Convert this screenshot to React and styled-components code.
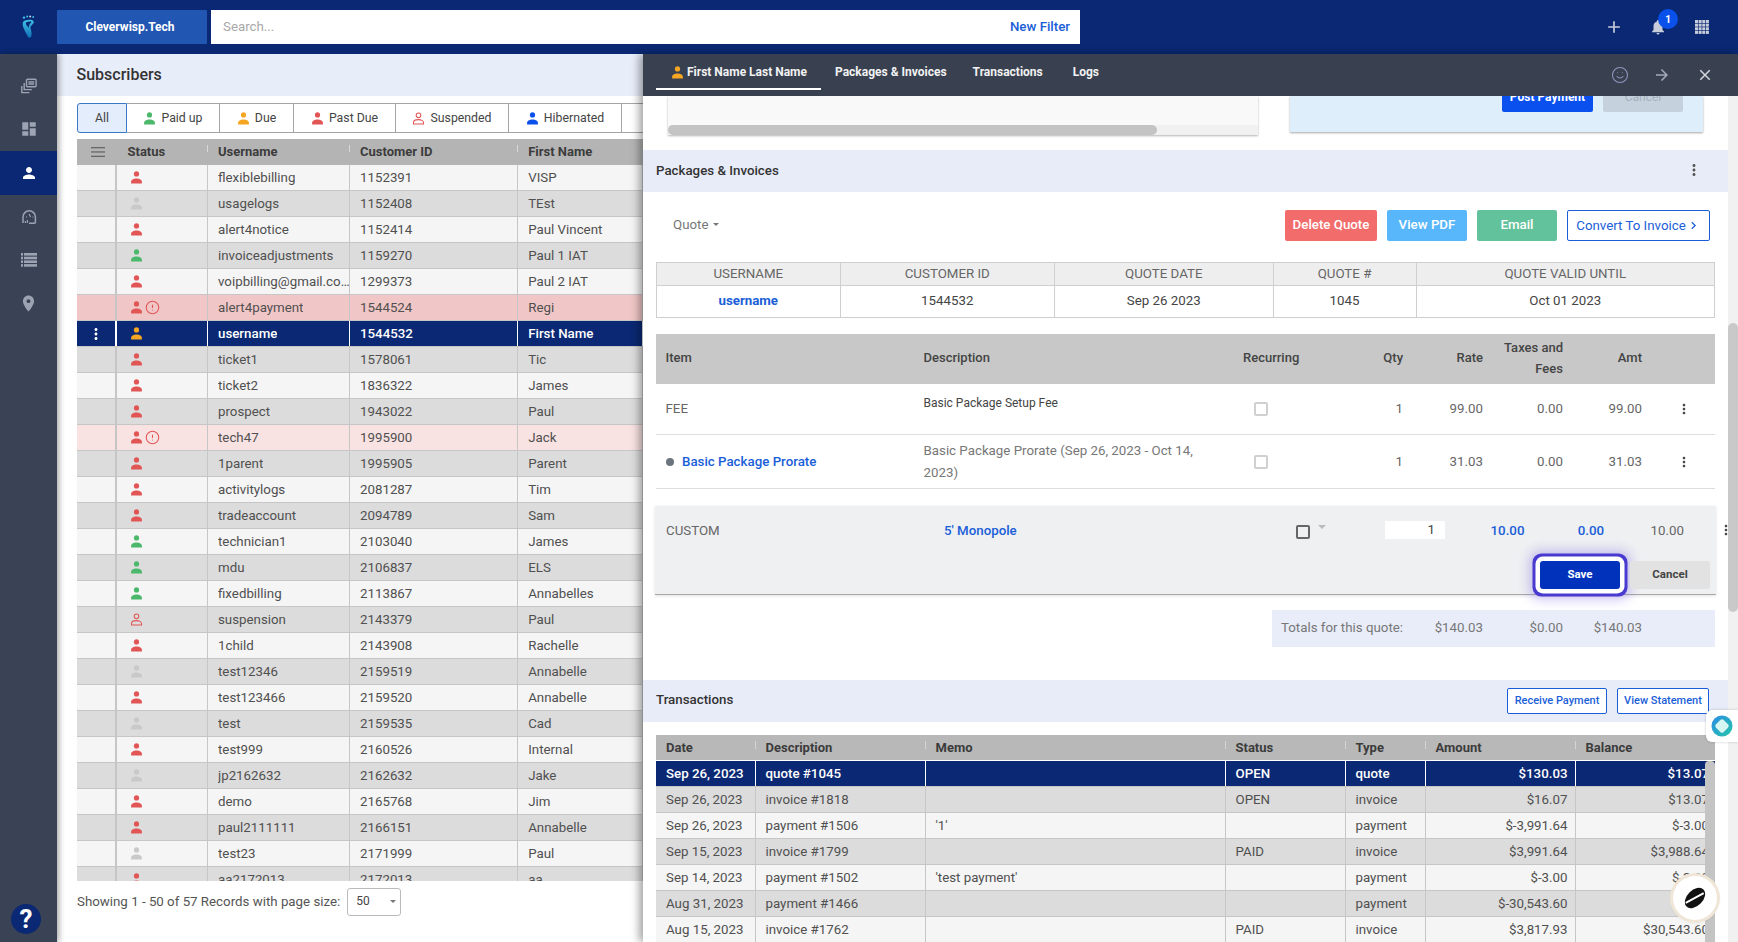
import React from "react";
import styled, { createGlobalStyle } from "styled-components";
import { MdDashboard, MdPerson, MdPlace, MdMoreVert, MdClose, MdArrowForward, MdAdd, MdNotifications, MdChevronRight } from "react-icons/md";
import { Smile, CircleAlert } from "lucide-react";

const Global = createGlobalStyle`
  html, body { margin: 0; padding: 0; height: 100%; overflow: hidden; background: #fff; }
  body { font-family: Roboto, "Liberation Sans", sans-serif; font-size: 13.3px; color: #444; }
  * { box-sizing: border-box; }
`;

const Page = styled.div`height: 942px; width: 1738px; display: flex; flex-direction: column; overflow: hidden;`;
const TopBar = styled.header`height: 54px; flex: none; background: #0a2873; display: flex; align-items: center;`;
const LogoCell = styled.div`width: 57px; display: flex; justify-content: center;`;
const Brand = styled.div`width: 150px; height: 34px; background: #2156b2; color: #fff; font-weight: 700; font-size: 12px; display: flex; align-items: center; justify-content: center; border-radius: 1px; padding: 0 4px 1px 0;`;
const SearchBox = styled.div`width: 869px; height: 34px; margin-left: 4px; background: #fff; display: flex; align-items: center; padding: 0 10px 2px 12px;`;
const SearchInput = styled.input`flex: 1; border: 0; outline: 0; font: 13.3px Roboto, sans-serif; padding: 0; &::placeholder { color: #a8a8a8; opacity: 1; }`;
const NewFilter = styled.span`color: #1a5ed8; font-weight: 500; font-size: 13.3px;`;
const TopIcons = styled.div`margin-left: auto; display: flex; align-items: center; gap: 0; padding-right: 14px; color: #c8cddb;`;
const TopIconCell = styled.div`width: 44px; display: flex; justify-content: center; position: relative;`;
const Badge = styled.span`position: absolute; top: -9px; left: 22px; width: 20px; height: 20px; border-radius: 50%; background: #0a50ea; color: #fff; font-size: 10px; font-weight: 700; display: flex; align-items: center; justify-content: center;`;

const Body = styled.div`flex: 1; min-height: 0; display: flex;`;
const Sidebar = styled.nav`width: 57px; flex: none; background: #3a4255; display: flex; flex-direction: column; padding-top: 10px; padding-bottom: 8px; box-shadow: 2px 0 6px rgba(0,0,0,.35); z-index: 2;`;
const SideItem = styled.div`height: 43.6px; display: flex; align-items: center; justify-content: center; background: ${p => p.$active ? "#0a2873" : "transparent"}; color: ${p => p.$active ? "#fff" : "#9ca3b2"};`;
const Help = styled.div`margin: auto 0 0 11px; width: 30px; height: 30px; border-radius: 50%; background: #0a2873; color: #fff; font-size: 26px; font-weight: 700; display: flex; align-items: center; justify-content: center;`;

const List = styled.section`width: 586px; flex: none; display: flex; flex-direction: column; overflow: hidden; background: #fff;`;
const ListTitle = styled.div`height: 42px; flex: none; background: #e8edfa; display: flex; align-items: center; padding: 0 0 2px 19.5px; font-size: 16px; font-weight: 500; color: #333;`;
const Tabs = styled.div`display: flex; flex: none; margin: 7px 0 6px 20px; height: 30px;`;
const Tab = styled.div`flex: none; width: ${p => p.$w}px; display: flex; align-items: center; justify-content: center; gap: 5px; font-size: 12.3px; color: #444; border: 1px solid #a5a5a5; border-left-width: 0; ${p => p.$active && "background: #e3edfb; border: 1px solid #3a78c8; border-radius: 3px 0 0 3px;"}`;
const GridHead = styled.div`margin-left: 20px; height: 26px; flex: none; display: grid; grid-template-columns: 40px 90.5px 142px 168.2px 1fr; background: #b4b4b4; font-weight: 700; font-size: 13px; color: #3c3c3c; padding-bottom: 1px;`;
const HeadCell = styled.div`display: flex; align-items: center; padding-left: ${p => p.$pl ?? 10.5}px; position: relative; ${p => p.$mark && `&::after { content: ""; position: absolute; right: 0; top: 6px; height: 7px; width: 1px; background: #d8d8d8; }`}`;
const Rows = styled.div`margin-left: 20px; flex: none; height: 716px; overflow: hidden;`;
const rowBg = { light: "#f5f5f5", dark: "#dcdcdc", pink: "#f0c6c6", lpink: "#f8e2e2", sel: "#0a2873" };
const Row = styled.div`height: 26px; display: grid; grid-template-columns: 40px 90.5px 142px 168.2px 1fr; background: ${p => rowBg[p.$bg]}; color: ${p => p.$bg === "sel" ? "#fff" : "#505050"}; font-weight: ${p => p.$bg === "sel" ? 500 : 400}; border-bottom: 1px solid #c6c6c6;`;
const Cell = styled.div`display: flex; align-items: center; padding-left: ${p => p.$pl ?? 10.5}px; border-right: 1px solid ${p => p.$sel ? "#fff" : "#c6c6c6"}; overflow: hidden; white-space: nowrap; gap: 2px; min-width: 0;`;
const Ellip = styled.span`overflow: hidden; text-overflow: ellipsis; margin-right: -2px;`;
const MenuCell = styled.div`display: flex; align-items: center; justify-content: center; color: #fff; border-right: 2px solid ${p => p.$sel ? "#fff" : "#c6c6c6"};`;
const Foot = styled.div`display: flex; align-items: center; gap: 7px; margin: 7px 0 0 20px; color: #555;`;
const FootText = styled.span`margin-bottom: 2px; white-space: nowrap;`;
const PageSize = styled.div`width: 54px; height: 28px; border: 1px solid #bbb; border-radius: 3px; display: flex; align-items: center; justify-content: space-between; padding: 0 4px 2px 8px; color: #444; font-size: 12px;`;
const Caret = styled.span`width: 0; height: 0; border-left: ${p => p.$s ?? 3}px solid transparent; border-right: ${p => p.$s ?? 3}px solid transparent; border-top: ${p => p.$s ?? 3}px solid ${p => p.$c ?? "#777"}; display: inline-block;`;

const Panel = styled.section`width: 1095px; flex: none; display: flex; flex-direction: column; background: #fff; box-shadow: -4px 0 8px rgba(0,0,0,.35); z-index: 3;`;
const PanelHead = styled.div`height: 42px; flex: none; background: #394150; display: flex; align-items: flex-start; padding-left: 13px; color: #fff;`;
const PanelTab = styled.div`display: flex; align-items: center; gap: 3px; font-size: 12px; font-weight: 700; height: 36px; padding-top: 2px; margin-right: ${p => p.$mr}px; padding-left: ${p => p.$pl ?? 0}px; padding-right: ${p => p.$pr ?? 0}px; border-bottom: 2px solid ${p => p.$on ? "#fff" : "transparent"}; color: #f2f2f2;`;
const PanelActions = styled.div`margin-left: auto; height: 42px; display: flex; align-items: center; color: #a3a9b8; padding-right: 12px;`;
const PanelAction = styled.div`width: 42.5px; display: flex; justify-content: center;`;
const ScrollWrap = styled.div`flex: 1; min-height: 0; display: flex;`;
const Content = styled.div`width: 1085px; flex: none; overflow: hidden; background: #fff;`;
const Track = styled.div`width: 10px; flex: none; background: #f1f1f1;`;
const Thumb = styled.div`margin-top: 227px; height: 289px; background: #c9c9c9; border-radius: 5px;`;

const CardsRow = styled.div`height: 54px; display: flex; gap: 32px; padding-left: 25px;`;
const GreyCard = styled.div`width: 590px; height: 39px; background: #f9f9f9; box-shadow: 0 1px 2px rgba(0,0,0,.3); display: flex; align-items: flex-end;`;
const HScrollTrack = styled.div`width: 100%; height: 10px; background: #f1f1f1;`;
const HScrollThumb = styled.div`width: 489px; height: 10px; border-radius: 5px; background: #c4c4c4;`;
const BlueCard = styled.div`width: 413px; height: 36px; background: #dfeefb; box-shadow: 0 1px 2px rgba(0,0,0,.35); display: flex; align-items: flex-end; justify-content: flex-end; gap: 10px; padding: 0 20px 20px 0; overflow: hidden;`;
const PostBtn = styled.div`flex: none; width: ${p => p.$w}px; height: 28px; border-radius: 2px; display: flex; align-items: center; justify-content: center; padding-bottom: 2px; font-size: 12px; font-weight: ${p => p.$muted ? 400 : 700}; background: ${p => p.$muted ? "#c5d2de" : "#0a50ef"}; color: ${p => p.$muted ? "#a5b0bb" : "#fff"};`;

const SectionBar = styled.div`height: 42px; background: #e8ecf9; display: flex; align-items: center; padding: 0 19px 0 13px; font-size: 13.3px; font-weight: 500; color: #333;`;
const BarTitle = styled.span`margin-bottom: ${p => p.$mb}px;`;
const BarEnd = styled.div`margin-left: auto; display: flex; gap: 10px; align-items: center; color: #555;`;
const BarKebab = styled.div`margin: 0 6px 2px 0; display: flex;`;
const QuoteRow = styled.div`height: 70px; display: flex; padding: 18px 18px 0 30px; gap: 10px;`;
const QuoteSelect = styled.div`display: flex; align-items: center; gap: 5px; height: 29px; color: #777; margin-right: auto;`;
const ActBtn = styled.div`flex: none; width: ${p => p.$w}px; height: 31px; border-radius: 2px; background: ${p => p.$bg}; color: #fff; font-size: 13.3px; font-weight: 500; display: flex; align-items: center; justify-content: center; padding-bottom: 2px;`;
const OutlineBtn = styled.div`flex: none; width: ${p => p.$w}px; height: ${p => p.$h}px; background: #fff; border: 1px solid #1a5ed8; border-radius: 2px; color: #1a5ed8; font-size: ${p => p.$fs}px; font-weight: ${p => p.$fw ?? 400}; display: flex; align-items: center; justify-content: center; padding-bottom: 1px;`;

const InfoTable = styled.div`margin: 0 13px; border: 1px solid #cfcfcf; display: grid; grid-template-columns: 183.5px 214.5px 218.5px 143px 1fr; text-align: center;`;
const InfoHead = styled.div`height: 23px; line-height: 22px; background: #eee; color: #666; border-bottom: 1px solid #cfcfcf; border-right: ${p => p.$last ? 0 : 1}px solid #cfcfcf;`;
const InfoCell = styled.div`height: 31px; line-height: 30px; color: ${p => p.$link ? "#1a5ed8" : "#444"}; font-weight: ${p => p.$link ? 700 : 400}; border-right: ${p => p.$last ? 0 : 1}px solid #cfcfcf;`;

const itemCols = "258.5px 328.5px 100px 60px 80px 80px 79px 1fr";
const ItemHead = styled.div`margin: 16px 13px 0; height: 50px; background: #c8c8c8; display: grid; grid-template-columns: ${itemCols}; align-items: center; font-weight: 500; font-size: 13px; color: #444; line-height: 21px; padding-bottom: 3px;`;
const ItemRow = styled.div`margin: 0 13px; height: ${p => p.$h}px; padding-bottom: ${p => p.$pb ?? 0}px; display: grid; grid-template-columns: ${itemCols}; align-items: center; border-bottom: 1px solid #ddd; color: #666;`;
const ColItem = styled.div`padding-left: ${p => p.$pl ?? 9.5}px; display: flex; align-items: center; gap: 8.5px;`;
const Bullet = styled.span`width: 8px; height: 8px; border-radius: 50%; background: #6c757d;`;
const BlueLink = styled.span`color: #1a5ed8; font-weight: 500;`;
const ColDesc = styled.div`padding: 0 30px 0 9px; line-height: 22px; color: #777;`;
const ColDescHead = styled.div`padding-left: 9px; color: #444;`;
const ColDescTop = styled(ColDesc)`padding-bottom: 10px; font-size: 12px; color: #444;`;
const ColRight = styled.div`text-align: right;`;
const ColKebab = styled.div`padding: ${p => p.$pt ?? 0}px 0 0 34px; display: flex; color: #444;`;
const CheckWrap = styled.div`padding: ${p => p.$pt ?? 0}px 0 0 11px; display: flex;`;
const Check = styled.span`width: 14px; height: 14px; border: 2px solid #d0d0d0; border-radius: 2px; background: #fff; display: block;`;

const EditRow = styled.div`margin: 17px 12px 0; height: 89px; background: #eef0f2; border-bottom: 1px solid #a8a8a8; box-shadow: 0 1px 3px rgba(0,0,0,.12); padding-top: 14px;`;
const EditLine = styled.div`height: 20px; display: grid; grid-template-columns: 289px 352px 89px 60px 79.5px 79.5px 80px 84px; align-items: center; color: #666;`;
const EditCheck = styled.div`display: flex; align-items: flex-start; gap: 8px; padding-top: 3px;`;
const DarkCheck = styled.span`width: 14px; height: 14px; border: 2px solid #666; border-radius: 2px; display: block;`;
const QtyInput = styled.div`height: 18px; background: #fff; text-align: right; padding-right: 10px; line-height: 18px; color: #444;`;
const EditKebab = styled.div`display: flex; justify-content: center; color: #444;`;
const EditBtns = styled.div`margin-top: 21px; display: flex; justify-content: flex-end; gap: 10px; padding-right: 6px;`;
const SaveBtn = styled.div`width: 80px; height: 28px; background: #0032bb; border-radius: 3px; color: #fff; font-size: 11.5px; font-weight: 700; display: flex; align-items: center; justify-content: center; padding-bottom: 2px; box-shadow: 0 0 0 4.5px #fff, 0 0 0 7.5px #4a3bd0, 0 0 12px 10px rgba(90,60,220,.32);`;
const CancelBtn = styled.div`width: 80px; height: 28px; background: #e2e2e2; border-radius: 2px; color: #444; font-size: 11.5px; font-weight: 700; display: flex; align-items: center; justify-content: center; padding-bottom: 2px;`;
const Totals = styled.div`margin: 15px 13px 33px 629px; height: 37px; background: #e8edf9; display: grid; grid-template-columns: 123px 79px 80px 79px; align-items: center; padding: 0 0 2px 9px; color: #777;`;

const txCols = "99.5px 170px 300px 120px 80px 150px 1fr";
const TxWrap = styled.div`margin: 13px 13px 0; position: relative;`;
const TxHead = styled.div`height: 25px; display: grid; grid-template-columns: ${txCols}; background: #b8b8b8; font-weight: 700; font-size: 13px; color: #3c3c3c;`;
const TxHeadCell = styled.div`display: flex; align-items: center; padding-left: 10px; position: relative; ${p => !p.$last && `&::after { content: ""; position: absolute; right: 0; top: 6px; height: 8px; width: 1px; background: #d5d5d5; }`}`;
const TxRow = styled.div`height: 26px; display: grid; grid-template-columns: ${txCols}; background: ${p => rowBg[p.$bg]}; color: ${p => p.$bg === "sel" ? "#fff" : "#505050"}; font-weight: ${p => p.$bg === "sel" ? 500 : 400}; border-top: 1px solid ${p => p.$bg === "sel" ? "#fff" : "#c6c6c6"};`;
const TxCell = styled.div`display: flex; align-items: center; padding: 0 ${p => p.$pr ?? 0}px 0 ${p => p.$num ? 0 : 10}px; justify-content: ${p => p.$num ? "flex-end" : "flex-start"}; border-right: ${p => p.$last ? 0 : 1}px solid ${p => p.$sel ? "#fff" : "#c6c6c6"}; overflow: hidden; white-space: nowrap;`;
const TxScroll = styled.div`position: absolute; right: 0; top: 26px; bottom: -2px; width: 10px; background: #c4c4c4; border-radius: 4px 4px 0 0;`;

const FloatTab = styled.div`position: fixed; right: 0; top: 710px; width: 32px; height: 32px; background: #fff; border-radius: 6px 0 0 6px; box-shadow: 0 0 3px rgba(0,0,0,.2); display: flex; align-items: center; justify-content: center; z-index: 5;`;
const FloatCircle = styled.div`position: fixed; left: 1673px; top: 876px; width: 44px; height: 44px; border-radius: 50%; background: #fff; box-shadow: 0 0 0 3px #f0e6d8, 0 1px 4px rgba(0,0,0,.2); display: flex; align-items: center; justify-content: center; z-index: 5;`;

const colors = { red: "#e25555", gray: "#c9c9c9", green: "#4cb86b", orange: "#f5a623", blue: "#0a50ea" };
const UserIcon = ({ c = "red", outline, size = 13 }) => (
  <svg width={size} height={size} viewBox="0 0 14 14" style={{ flex: "none" }}>
    {outline ? (
      <g fill="none" stroke={colors[c]} strokeWidth="1.1">
        <circle cx="7" cy="3.6" r="2.5" />
        <path d="M1.6 13v-1.6c0-2 2.6-3.2 5.4-3.2s5.4 1.2 5.4 3.2V13z" />
      </g>
    ) : (
      <g fill={colors[c]}>
        <circle cx="7" cy="3.2" r="2.8" />
        <path d="M1.2 13.4v-2c0-2 2.8-3.4 5.8-3.4s5.8 1.4 5.8 3.4v2z" />
      </g>
    )}
  </svg>
);

const Foot1 = () => (
  <svg width="15" height="24" viewBox="0 0 15 24">
    <defs><linearGradient id="ft" x1="0" y1="0" x2="0" y2="1"><stop offset="0" stopColor="#3fc3ea" /><stop offset="1" stopColor="#0f6fb5" /></linearGradient></defs>
    <circle cx="3" cy="2.6" r="1.2" fill="#3fc3ea" /><circle cx="6.2" cy="1.6" r="1" fill="#3fc3ea" /><circle cx="9.2" cy="1.4" r="1" fill="#fff" opacity=".8" /><circle cx="12.2" cy="2" r=".9" fill="#3fc3ea" />
    <path d="M2 7c2-2.4 9-3 10.6-.6 1 1.8-2.2 3.2-3 5.4-.6 2 2 5.6.6 9.6-.8 1.6-2.6 2-3.4.2C5 17.6 .4 11.2 2 7z" fill="url(#ft)" />
    <path d="M5 7.4c2-1 4.4-1.2 5.6-.4-1.4 1.4-3 3-2.8 6-.8-1.8-3.6-3.4-2.8-5.6z" fill="#0a2873" />
  </svg>
);
const GridDots = () => (
  <svg width="14" height="14" viewBox="0 0 15 15" fill="#c8cddb">
    {[0, 1, 2, 3].flatMap(r => [0, 1, 2, 3].map(c => <rect key={`${r}${c}`} x={c * 3.9} y={r * 3.9} width="3.2" height="3.2" />))}
  </svg>
);
const CardsIcon = () => (
  <svg width="16" height="16" viewBox="0 0 16 16" fill="none" stroke="currentColor" strokeWidth="1.4">
    <rect x="5.5" y="1.2" width="9.6" height="7.6" rx="1" />
    <path d="M7.4 4h5.8M7.4 6h5.8" strokeWidth="1.6" />
    <path d="M3.2 5v6.6h7.6M.8 8v6.6h7.6" />
  </svg>
);
const GaugeIcon = () => (
  <svg width="16" height="16" viewBox="0 0 16 16" fill="none" stroke="currentColor" strokeWidth="1.5">
    <path d="M2 14V8a6.2 6.2 0 0 1 12.4 0v5.2a1 1 0 0 1-1 1H8" />
    <path d="M8 5l1.6 3M5 8h1M11.4 8h1M8 5v.1" strokeWidth="1.2" />
    <path d="M4.4 14V12M6.4 14v-3" strokeWidth="1.2" />
  </svg>
);
const ListIcon = () => (
  <svg width="16" height="14" viewBox="0 0 16 14" fill="currentColor">
    {[0, 1, 2, 3].map(i => <g key={i}><rect x="0" y={i * 3.7} width="2" height="2.6" /><rect x="3" y={i * 3.7} width="13" height="2.6" /></g>)}
  </svg>
);
const Burger = () => (
  <svg width="14" height="10" viewBox="0 0 14 10" fill="#666"><rect width="14" height="1.3" /><rect y="4.3" width="14" height="1.3" /><rect y="8.7" width="14" height="1.3" /></svg>
);
const Diamond = () => (
  <svg width="22" height="22" viewBox="0 0 22 22">
    <defs><linearGradient id="dg" x1="0" y1="0" x2="1" y2="1"><stop offset="0" stopColor="#2a8ce8" /><stop offset="1" stopColor="#26c6a8" /></linearGradient></defs>
    <circle cx="11" cy="11" r="10.5" fill="url(#dg)" />
    <rect x="5.6" y="5.6" width="10.8" height="10.8" rx="2.4" transform="rotate(45 11 11)" fill="#d6f6f2" />
  </svg>
);
const Bean = () => (
  <svg width="24" height="24" viewBox="0 0 22 22">
    <ellipse cx="11" cy="11" rx="7.2" ry="11" transform="rotate(45 11 11)" fill="#111" />
    <path d="M2.5 15.5 19 6.5" stroke="#fff" strokeWidth="1.8" />
  </svg>
);

const subs = [
  ["flexiblebilling", "1152391", "VISP", "red"], ["usagelogs", "1152408", "TEst", "gray"], ["alert4notice", "1152414", "Paul Vincent", "red"],
  ["invoiceadjustments", "1159270", "Paul 1 IAT", "green"], ["voipbilling@gmail.com", "1299373", "Paul 2 IAT", "red"],
  ["alert4payment", "1544524", "Regi", "red", "pink"], ["username", "1544532", "First Name", "orange", "sel"],
  ["ticket1", "1578061", "Tic", "red"], ["ticket2", "1836322", "James", "red"], ["prospect", "1943022", "Paul", "red"],
  ["tech47", "1995900", "Jack", "red", "lpink"], ["1parent", "1995905", "Parent", "red"], ["activitylogs", "2081287", "Tim", "red"],
  ["tradeaccount", "2094789", "Sam", "red"], ["technician1", "2103040", "James", "green"], ["mdu", "2106837", "ELS", "green"],
  ["fixedbilling", "2113867", "Annabelles", "green"], ["suspension", "2143379", "Paul", "red", null, true], ["1child", "2143908", "Rachelle", "red"],
  ["test12346", "2159519", "Annabelle", "gray"], ["test123466", "2159520", "Annabelle", "red"], ["test", "2159535", "Cad", "gray"],
  ["test999", "2160526", "Internal", "red"], ["jp2162632", "2162632", "Jake", "gray"], ["demo", "2165768", "Jim", "red"],
  ["paul2111111", "2166151", "Annabelle", "red"], ["test23", "2171999", "Paul", "gray"], ["aa2172013", "2172013", "aa", "red"],
];
const tabs = [["All", 50], ["Paid up", 93, "green"], ["Due", 74, "orange"], ["Past Due", 102, "red"], ["Suspended", 113, "red", true], ["Hibernated", 113, "blue"], ["", 60]];
const txs = [
  ["Sep 26, 2023", "quote #1045", "", "OPEN", "quote", "$130.03", "$13.07", "sel"],
  ["Sep 26, 2023", "invoice #1818", "", "OPEN", "invoice", "$16.07", "$13.07", "dark"],
  ["Sep 26, 2023", "payment #1506", "'1'", "", "payment", "$-3,991.64", "$-3.00", "light"],
  ["Sep 15, 2023", "invoice #1799", "", "PAID", "invoice", "$3,991.64", "$3,988.64", "dark"],
  ["Sep 14, 2023", "payment #1502", "'test payment'", "", "payment", "$-3.00", "$-3.00", "light"],
  ["Aug 31, 2023", "payment #1466", "", "", "payment", "$-30,543.60", "", "dark"],
  ["Aug 15, 2023", "invoice #1762", "", "PAID", "invoice", "$3,817.93", "$30,543.60", "light"],
];

export default function App() {
  return (
    <Page>
      <Global />
      <TopBar>
        <LogoCell><Foot1 /></LogoCell>
        <Brand>Cleverwisp.Tech</Brand>
        <SearchBox>
          <SearchInput placeholder="Search..." readOnly />
          <NewFilter>New Filter</NewFilter>
        </SearchBox>
        <TopIcons>
          <TopIconCell><MdAdd size={20} /></TopIconCell>
          <TopIconCell><MdNotifications size={18} /><Badge>1</Badge></TopIconCell>
          <TopIconCell><GridDots /></TopIconCell>
        </TopIcons>
      </TopBar>
      <Body>
        <Sidebar>
          <SideItem><CardsIcon /></SideItem>
          <SideItem><MdDashboard size={18} /></SideItem>
          <SideItem $active><MdPerson size={18} /></SideItem>
          <SideItem><GaugeIcon /></SideItem>
          <SideItem><ListIcon /></SideItem>
          <SideItem><MdPlace size={19} /></SideItem>
          <Help>?</Help>
        </Sidebar>
        <List>
          <ListTitle>Subscribers</ListTitle>
          <Tabs>
            {tabs.map(([t, w, c, o], i) => (
              <Tab key={i} $w={w} $active={i === 0}>
                {c && <UserIcon c={c} outline={o} size={13} />}{t}
              </Tab>
            ))}
          </Tabs>
          <GridHead>
            <HeadCell $pl={14}><Burger /></HeadCell>
            <HeadCell $mark>Status</HeadCell>
            <HeadCell $mark>Username</HeadCell>
            <HeadCell $mark>Customer ID</HeadCell>
            <HeadCell>First Name</HeadCell>
          </GridHead>
          <Rows>
            {subs.map(([u, id, f, c, bg, o], i) => {
              const kind = bg || (i % 2 ? "dark" : "light");
              const sel = kind === "sel";
              return (
                <Row key={u} $bg={kind}>
                  <MenuCell $sel={sel}>{sel && <MdMoreVert size={18} />}</MenuCell>
                  <Cell $pl={12.5} $sel={sel}>
                    <UserIcon c={c} outline={o} />
                    {(kind === "pink" || kind === "lpink") && <CircleAlert size={15} color="#e25555" strokeWidth={1.7} />}
                  </Cell>
                  <Cell $sel={sel}><Ellip>{u}</Ellip></Cell>
                  <Cell $sel={sel}>{id}</Cell>
                  <Cell $sel={sel}>{f}</Cell>
                </Row>
              );
            })}
          </Rows>
          <Foot>
            <FootText>Showing 1 - 50 of 57 Records with page size:</FootText>
            <PageSize>50<Caret /></PageSize>
          </Foot>
        </List>
        <Panel>
          <PanelHead>
            <PanelTab $on $pl={15} $pr={14} $mr={14}><UserIcon c="orange" size={13} />First Name Last Name</PanelTab>
            <PanelTab $mr={26}>Packages &amp; Invoices</PanelTab>
            <PanelTab $mr={30}>Transactions</PanelTab>
            <PanelTab>Logs</PanelTab>
            <PanelActions>
              <PanelAction><Smile size={18} strokeWidth={1.4} color="#8f98bc" /></PanelAction>
              <PanelAction><MdArrowForward size={18} /></PanelAction>
              <PanelAction><MdClose size={18} color="#d4d7de" /></PanelAction>
            </PanelActions>
          </PanelHead>
          <ScrollWrap>
            <Content>
              <CardsRow>
                <GreyCard><HScrollTrack><HScrollThumb /></HScrollTrack></GreyCard>
                <BlueCard>
                  <PostBtn $w={91}>Post Payment</PostBtn>
                  <PostBtn $w={80} $muted>Cancel</PostBtn>
                </BlueCard>
              </CardsRow>
              <SectionBar>
                <BarTitle $mb={2}>Packages &amp; Invoices</BarTitle>
                <BarEnd><BarKebab><MdMoreVert size={18} /></BarKebab></BarEnd>
              </SectionBar>
              <QuoteRow>
                <QuoteSelect>Quote <Caret /></QuoteSelect>
                <ActBtn $w={92} $bg="#f26c6c">Delete Quote</ActBtn>
                <ActBtn $w={80} $bg="#58b7fb">View PDF</ActBtn>
                <ActBtn $w={80} $bg="#62c29b">Email</ActBtn>
                <OutlineBtn $w={143} $h={31} $fs={13.3}>Convert To Invoice <MdChevronRight size={15} /></OutlineBtn>
              </QuoteRow>
              <InfoTable>
                <InfoHead>USERNAME</InfoHead>
                <InfoHead>CUSTOMER ID</InfoHead>
                <InfoHead>QUOTE DATE</InfoHead>
                <InfoHead>QUOTE #</InfoHead>
                <InfoHead $last>QUOTE VALID UNTIL</InfoHead>
                <InfoCell $link>username</InfoCell>
                <InfoCell>1544532</InfoCell>
                <InfoCell>Sep 26 2023</InfoCell>
                <InfoCell>1045</InfoCell>
                <InfoCell $last>Oct 01 2023</InfoCell>
              </InfoTable>
              <ItemHead>
                <ColItem>Item</ColItem>
                <ColDescHead>Description</ColDescHead>
                <div>Recurring</div>
                <ColRight>Qty</ColRight>
                <ColRight>Rate</ColRight>
                <ColRight>Taxes and<br />Fees</ColRight>
                <ColRight>Amt</ColRight>
              </ItemHead>
              <ItemRow $h={51} $pb={2}>
                <ColItem>FEE</ColItem>
                <ColDescTop>Basic Package Setup Fee</ColDescTop>
                <CheckWrap $pt={2}><Check /></CheckWrap>
                <ColRight>1</ColRight>
                <ColRight>99.00</ColRight>
                <ColRight>0.00</ColRight>
                <ColRight>99.00</ColRight>
                <ColKebab $pt={2}><MdMoreVert size={16} /></ColKebab>
              </ItemRow>
              <ItemRow $h={54}>
                <ColItem><Bullet /><BlueLink>Basic Package Prorate</BlueLink></ColItem>
                <ColDesc>Basic Package Prorate (Sep 26, 2023 - Oct 14, 2023)</ColDesc>
                <CheckWrap><Check /></CheckWrap>
                <ColRight>1</ColRight>
                <ColRight>31.03</ColRight>
                <ColRight>0.00</ColRight>
                <ColRight>31.03</ColRight>
                <ColKebab><MdMoreVert size={16} /></ColKebab>
              </ItemRow>
              <EditRow>
                <EditLine>
                  <ColItem $pl={11}>CUSTOM</ColItem>
                  <BlueLink>5' Monopole</BlueLink>
                  <EditCheck><DarkCheck /><Caret $c="#bbb" $s={4} /></EditCheck>
                  <QtyInput>1</QtyInput>
                  <ColRight><BlueLink>10.00</BlueLink></ColRight>
                  <ColRight><BlueLink>0.00</BlueLink></ColRight>
                  <ColRight>10.00</ColRight>
                  <EditKebab><MdMoreVert size={16} /></EditKebab>
                </EditLine>
                <EditBtns>
                  <SaveBtn>Save</SaveBtn>
                  <CancelBtn>Cancel</CancelBtn>
                </EditBtns>
              </EditRow>
              <Totals>
                <span>Totals for this quote:</span>
                <ColRight>$140.03</ColRight>
                <ColRight>$0.00</ColRight>
                <ColRight>$140.03</ColRight>
              </Totals>
              <SectionBar>
                <BarTitle $mb={4}>Transactions</BarTitle>
                <BarEnd>
                  <OutlineBtn $w={100} $h={26} $fs={11} $fw={500}>Receive Payment</OutlineBtn>
                  <OutlineBtn $w={92} $h={26} $fs={11} $fw={500}>View Statement</OutlineBtn>
                </BarEnd>
              </SectionBar>
              <TxWrap>
                <TxHead>
                  {["Date", "Description", "Memo", "Status", "Type", "Amount", "Balance"].map((h, i) => <TxHeadCell key={h} $last={i === 6}>{h}</TxHeadCell>)}
                </TxHead>
                {txs.map(r => {
                  const sel = r[7] === "sel";
                  return (
                    <TxRow key={r[1]} $bg={r[7]}>
                      <TxCell $sel={sel}>{r[0]}</TxCell>
                      <TxCell $sel={sel}>{r[1]}</TxCell>
                      <TxCell $sel={sel}>{r[2]}</TxCell>
                      <TxCell $sel={sel}>{r[3]}</TxCell>
                      <TxCell $sel={sel}>{r[4]}</TxCell>
                      <TxCell $sel={sel} $num $pr={7}>{r[5]}</TxCell>
                      <TxCell $sel={sel} $num $pr={6} $last>{r[6]}</TxCell>
                    </TxRow>
                  );
                })}
                <TxScroll />
              </TxWrap>
            </Content>
            <Track><Thumb /></Track>
          </ScrollWrap>
        </Panel>
      </Body>
      <FloatTab><Diamond /></FloatTab>
      <FloatCircle><Bean /></FloatCircle>
    </Page>
  );
}
